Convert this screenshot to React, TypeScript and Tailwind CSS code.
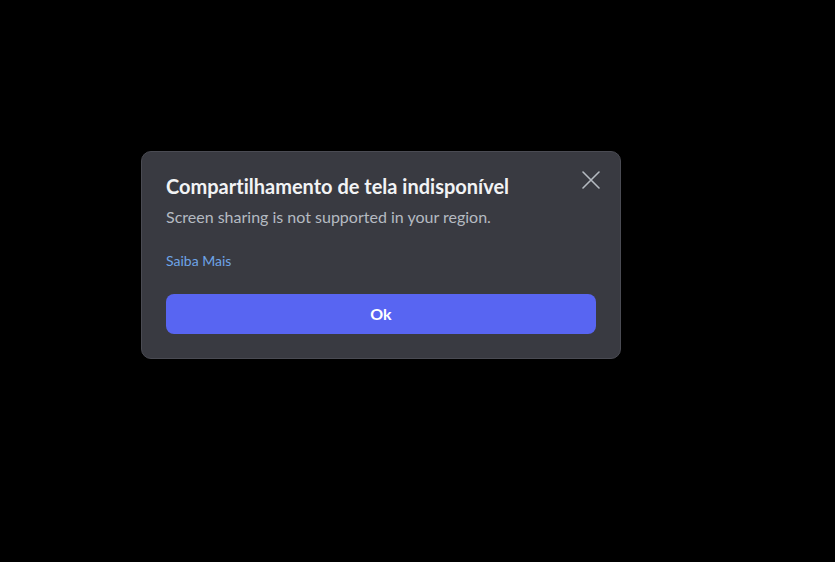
import React from 'react';

function CloseIcon() {
  return (
    <svg width="18" height="18" viewBox="0 0 18 18" fill="none">
      <path d="M1 1L17 17M17 1L1 17" stroke="currentColor" strokeWidth="1.6" strokeLinecap="round" />
    </svg>
  );
}

export default function App() {
  return (
    <div
      className="min-h-[562px] w-full bg-black pt-[151px] pl-[141px] [font-variant-ligatures:none]"
      style={{ fontFamily: 'Lato, "Noto Sans", sans-serif' }}
    >
      <div className="w-[480px] rounded-[10px] border border-[#4a4b53] bg-[#393a41]">
        {/* Header */}
        <div className="relative px-[24px] pt-[22px]">
          <h1 className="text-[20px] leading-[24px] font-bold text-[#f2f3f5]">
            Compartilhamento de tela indisponível
          </h1>
          <button className="absolute right-[20px] top-[19px] p-0 text-[#b5bac1]">
            <CloseIcon />
          </button>
          <p className="mt-[9px] text-[16px] leading-[20px] text-[#b5bac1]">
            Screen sharing is not supported in your region.
          </p>
        </div>

        <div className="px-[24px] pt-[25px]">
          <a className="block text-[14px] leading-[18px] text-[#6ea4e8]">Saiba Mais</a>
        </div>

        {/* Footer */}
        <div className="px-[24px] pt-[24px] pb-[24px]">
          <button className="flex h-[40px] w-full items-center justify-center rounded-[8px] bg-[#5865f2] text-[16px] font-bold text-white">
            Ok
          </button>
        </div>
      </div>
    </div>
  );
}
